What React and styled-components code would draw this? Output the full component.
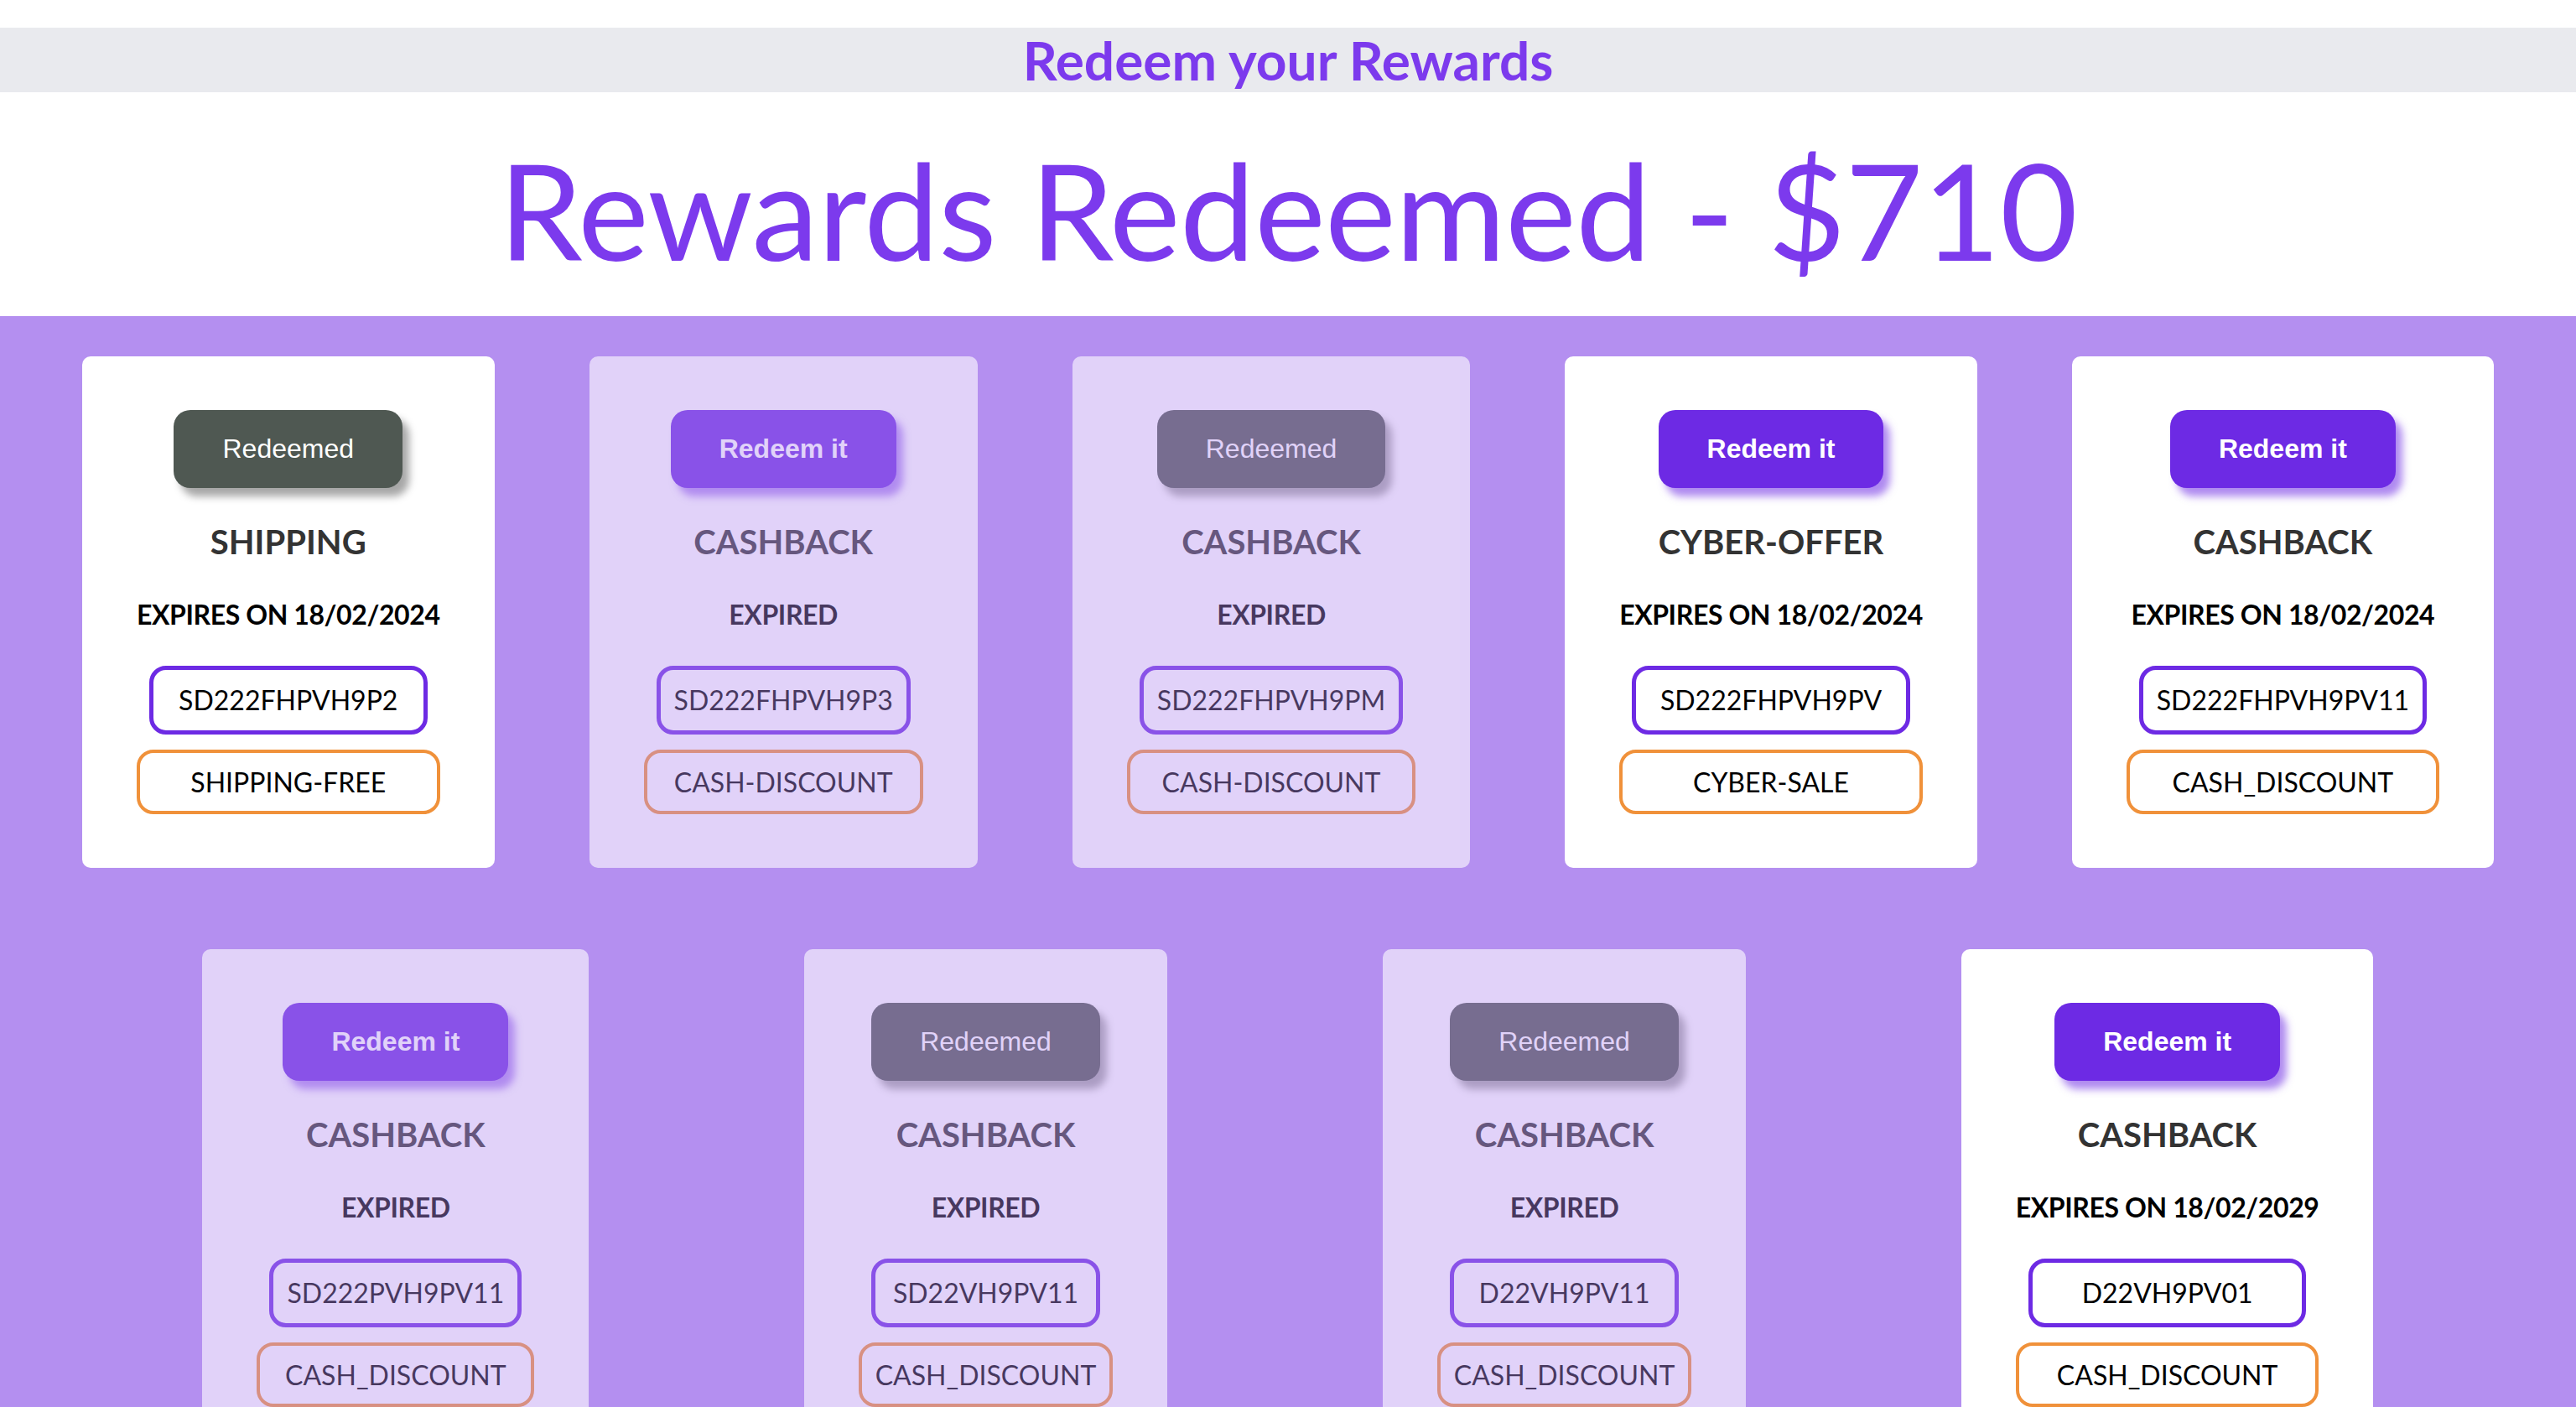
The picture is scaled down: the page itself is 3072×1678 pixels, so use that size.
import React from "react";
import styled, { createGlobalStyle } from "styled-components";

const GlobalStyle = createGlobalStyle`
	* {
		box-sizing: border-box;
	}

	body {
		margin: 0;
		background: #ffffff;
		font-family: Lato, "Open Sans", sans-serif;
	}
`;

const Page = styled.div`
	padding-top: 33px;
	background: #ffffff;
`;

const Banner = styled.h2`
	margin: 0;
	background: #e9eaee;
	color: #7c3aed;
	font-size: 64px;
	font-weight: 700;
	line-height: 77px;
	text-align: center;
`;

const Hero = styled.h1`
	margin: 0;
	padding: 43px 0 32px;
	color: #7c3aed;
	font-size: 160px;
	font-weight: 400;
	line-height: 192px;
	letter-spacing: -0.5px;
	text-align: center;
`;

const Board = styled.div`
	display: flex;
	flex-direction: column;
	gap: 97px;
	padding: 48px 0 80px;
	background: #b48ff0;
`;

const Row = styled.div`
	display: flex;
	justify-content: space-evenly;
	align-items: flex-start;
	gap: 15px;
`;

const Card = styled.div`
	display: flex;
	flex-direction: column;
	align-items: center;
	padding: 64px 65px;
	background: #ffffff;
	border-radius: 10px;
	opacity: ${props => (props.expired ? 0.6 : 1)};
`;

const RedeemButton = styled.button`
	padding: 28px 58px;
	border: none;
	border-radius: 20px;
	background: ${props => (props.redeemed ? "#4f5852" : "#6d2ae4")};
	color: #ffffff;
	font-family: "Liberation Sans", Arial, sans-serif;
	font-size: 32px;
	font-weight: ${props => (props.redeemed ? 400 : 700)};
	line-height: 37px;
	box-shadow: ${props =>
		props.redeemed
			? "8px 10px 10px rgba(0, 0, 0, 0.35)"
			: "8px 10px 10px rgba(109, 42, 228, 0.55)"};
	cursor: pointer;
`;

const Title = styled.h3`
	margin: 40px 0 0;
	color: #333333;
	font-size: 40px;
	font-weight: 700;
	line-height: 48px;
`;

const Expiry = styled.h4`
	margin: 44px 0 0;
	color: #000000;
	font-size: 32px;
	font-weight: 700;
	line-height: 38px;
	letter-spacing: -0.4px;
	white-space: nowrap;
`;

const Codes = styled.div`
	align-self: stretch;
	display: flex;
	flex-direction: column;
	align-items: stretch;
	gap: 18px;
	margin-top: 42px;
`;

const CodeBox = styled.div`
	margin: 0 15px;
	padding: 16px;
	border: 5px solid #6d2ae4;
	border-radius: 20px;
	color: #000000;
	font-size: 32px;
	line-height: 40px;
	text-align: center;
	white-space: nowrap;
`;

const DealBox = styled.div`
	padding: 14px 16px;
	border: 4px solid #f0913a;
	border-radius: 20px;
	color: #000000;
	font-size: 32px;
	line-height: 41px;
	text-align: center;
	white-space: nowrap;
`;

const rewards = [
	[
		{ id: 1, redeemed: true, title: "SHIPPING", expires: "18/02/2024", code: "SD222FHPVH9P2", deal: "SHIPPING-FREE" },
		{ id: 2, redeemed: false, title: "CASHBACK", expired: true, code: "SD222FHPVH9P3", deal: "CASH-DISCOUNT" },
		{ id: 3, redeemed: true, title: "CASHBACK", expired: true, code: "SD222FHPVH9PM", deal: "CASH-DISCOUNT" },
		{ id: 4, redeemed: false, title: "CYBER-OFFER", expires: "18/02/2024", code: "SD222FHPVH9PV", deal: "CYBER-SALE" },
		{ id: 5, redeemed: false, title: "CASHBACK", expires: "18/02/2024", code: "SD222FHPVH9PV11", deal: "CASH_DISCOUNT" },
	],
	[
		{ id: 6, redeemed: false, title: "CASHBACK", expired: true, code: "SD222PVH9PV11", deal: "CASH_DISCOUNT" },
		{ id: 7, redeemed: true, title: "CASHBACK", expired: true, code: "SD22VH9PV11", deal: "CASH_DISCOUNT" },
		{ id: 8, redeemed: true, title: "CASHBACK", expired: true, code: "D22VH9PV11", deal: "CASH_DISCOUNT" },
		{ id: 9, redeemed: false, title: "CASHBACK", expires: "18/02/2029", code: "D22VH9PV01", deal: "CASH_DISCOUNT" },
	],
];

const RewardCard = ({ reward }) => (
	<Card expired={reward.expired}>
		<RedeemButton redeemed={reward.redeemed}>
			{reward.redeemed ? "Redeemed" : "Redeem it"}
		</RedeemButton>
		<Title>{reward.title}</Title>
		<Expiry>{reward.expired ? "EXPIRED" : `EXPIRES ON ${reward.expires}`}</Expiry>
		<Codes>
			<CodeBox>{reward.code}</CodeBox>
			<DealBox>{reward.deal}</DealBox>
		</Codes>
	</Card>
);

const App = () => (
	<Page>
		<GlobalStyle />
		<Banner>Redeem your Rewards</Banner>
		<Hero>Rewards Redeemed - $710</Hero>
		<Board>
			{rewards.map((row, i) => (
				<Row key={i}>
					{row.map(reward => (
						<RewardCard key={reward.id} reward={reward} />
					))}
				</Row>
			))}
		</Board>
	</Page>
);

export default App;
